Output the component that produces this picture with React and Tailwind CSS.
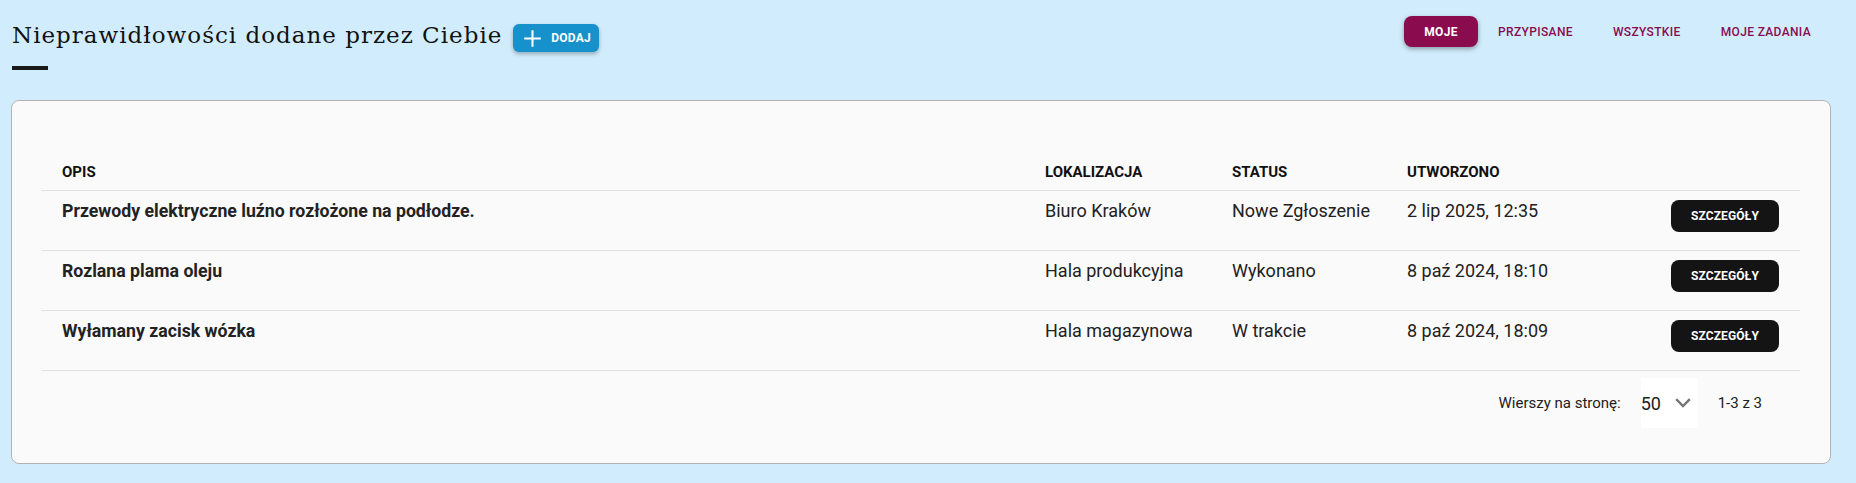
import React from "react";

const rows = [
  { opis: "Przewody elektryczne luźno rozłożone na podłodze.", lok: "Biuro Kraków", status: "Nowe Zgłoszenie", date: "2 lip 2025, 12:35" },
  { opis: "Rozlana plama oleju", lok: "Hala produkcyjna", status: "Wykonano", date: "8 paź 2024, 18:10" },
  { opis: "Wyłamany zacisk wózka", lok: "Hala magazynowa", status: "W trakcie", date: "8 paź 2024, 18:09" },
];

const grid = "grid grid-cols-[983px_187px_175px_1fr_auto]";

export default function App() {
  return (
    <div className="min-h-[483px] w-full bg-[#d1edfd] pl-[11px] pr-[25px] pt-[16px] font-['Roboto',sans-serif] text-[#212121]">
      {/* top bar */}
      <div className="flex items-start justify-between">
        <div className="mt-[4px] flex flex-col pl-[1px]">
          <div className="flex items-start gap-[11px]">
            <h1 className="font-['DejaVu_Serif',serif] text-[23px] leading-[30px] font-normal tracking-[1px] text-[#111]">
              Nieprawidłowości dodane przez Ciebie
            </h1>
            <button className="mt-[4px] flex h-[28px] items-center gap-[9px] rounded-[6px] bg-[#1791cb] pl-[10px] pr-[8px] text-white shadow-[0_2px_4px_rgba(0,0,0,0.3)]">
              <svg width="19" height="19" viewBox="0 0 24 24" fill="none" stroke="white" strokeWidth="2.6" strokeLinecap="butt">
                <path d="M1.5 12h21M12 1.5v21" />
              </svg>
              <span className="text-[12px] font-bold leading-none tracking-[0.2px]">DODAJ</span>
            </button>
          </div>
          <div className="mt-[14px] h-[4px] w-[36px] bg-[#1a1a1a]" />
        </div>
        <div className="flex items-center">
          <button className="flex h-[31px] w-[74px] items-center justify-center rounded-[8px] bg-[#8a0c4f] text-[12px] font-bold tracking-[0.35px] text-white shadow-[0_2px_5px_rgba(0,0,0,0.35)]">
            MOJE
          </button>
          <button className="h-[31px] px-[20px] text-[12px] font-medium tracking-[0.35px] text-[#8a0c4f]">PRZYPISANE</button>
          <button className="h-[31px] px-[20px] text-[12px] font-medium tracking-[0.35px] text-[#8a0c4f]">WSZYSTKIE</button>
          <button className="h-[31px] px-[20px] text-[12px] font-medium tracking-[0.35px] text-[#8a0c4f]">MOJE ZADANIA</button>
        </div>
      </div>

      {/* card */}
      <div className="mt-[30px] rounded-[8px] border border-[#b3b3b3] bg-[#fafafa] px-[30px] pt-[30px] pb-[35px]">
        <div className={`${grid} h-[60px] items-end border-b border-[#e0e0e0] pb-[8px] text-[15px] leading-[20px] font-bold text-[#111]`}>
          <div className="pl-[20px]">OPIS</div>
          <div className="pl-[20px]">LOKALIZACJA</div>
          <div className="pl-[20px]">STATUS</div>
          <div className="pl-[20px]">UTWORZONO</div>
          <div className="w-[150px]" />
        </div>
        {rows.map((r) => (
          <div key={r.opis} className={`${grid} h-[60px] items-start border-b border-[#e0e0e0] pt-[9px] text-[18px] leading-[22px]`}>
            <div className="pl-[20px] text-[17.7px] font-bold text-[#222]">{r.opis}</div>
            <div className="pl-[20px]">{r.lok}</div>
            <div className="pl-[20px]">{r.status}</div>
            <div className="pl-[20px]">{r.date}</div>
            <div className="flex w-[150px] justify-end pr-[21px]">
              <button className="flex h-[32px] w-[108px] items-center justify-center rounded-[8px] bg-[#141414] text-[12px] font-bold tracking-[0.1px] text-white">
                SZCZEGÓŁY
              </button>
            </div>
          </div>
        ))}
        <div className="flex items-center justify-end pt-[7px] pr-[38px] text-[15px]">
          <span className="mr-[20px]">Wierszy na stronę:</span>
          <div className="flex h-[50px] w-[57px] items-center bg-white">
            <span className="text-[18px]">50</span>
            <svg className="ml-[14px]" width="16" height="10" viewBox="0 0 16 10" fill="none" stroke="#757575" strokeWidth="2.4">
              <polyline points="1.2,1.2 8,8 14.8,1.2" />
            </svg>
          </div>
          <span className="ml-[20px]">1-3 z 3</span>
        </div>
      </div>
    </div>
  );
}
